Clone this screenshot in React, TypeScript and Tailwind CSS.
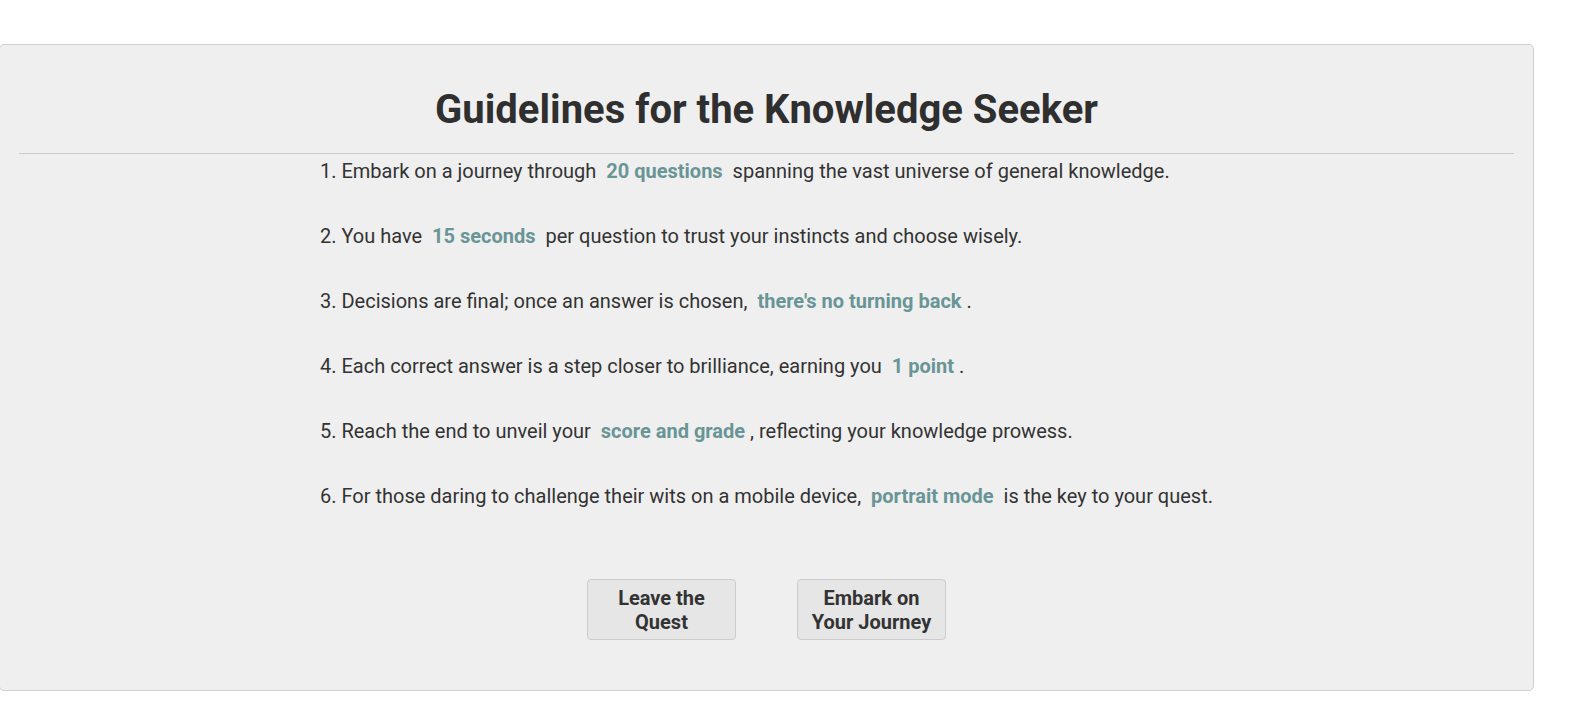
import React from 'react';

const rules: { before: string; mark: string; after: string }[] = [
  { before: '1. Embark on a journey through ', mark: '20 questions', after: ' spanning the vast universe of general knowledge.' },
  { before: '2. You have ', mark: '15 seconds', after: ' per question to trust your instincts and choose wisely.' },
  { before: '3. Decisions are final; once an answer is chosen, ', mark: "there's no turning back", after: '.' },
  { before: '4. Each correct answer is a step closer to brilliance, earning you ', mark: '1 point', after: '.' },
  { before: '5. Reach the end to unveil your ', mark: 'score and grade', after: ', reflecting your knowledge prowess.' },
  { before: '6. For those daring to challenge their wits on a mobile device, ', mark: 'portrait mode', after: ' is the key to your quest.' },
];

export default function App() {
  return (
    <div className="min-h-screen bg-white pt-[44px] font-['Roboto',sans-serif] text-[#333]">
      <div className="-ml-[1px] w-[1535px] rounded-[5px] border border-[#cfcfcf] bg-[#efefef] pt-[41px] pb-[50px]">
        <h1 className="text-center text-[40px] font-bold leading-[48px] text-[#2f2f2f]">
          Guidelines for the Knowledge Seeker
        </h1>
        <hr className="mx-[19px] mt-[19px] border-0 border-t border-[#cccccc]" />
        <ul className="mx-auto mt-[2px] flex w-fit flex-col gap-[35px]">
          {rules.map((r, i) => (
            <li key={i} className="text-[20px] leading-[30px]">
              {r.before}
              <span className="mx-[5px] font-bold text-[#699596]">{r.mark}</span>
              {r.after}
            </li>
          ))}
        </ul>
        <div className="mt-[68px] flex justify-center gap-[61px]">
          <button className="flex h-[61px] w-[149px] items-center justify-center rounded-[4px] border border-[#cccccc] bg-[#e6e6e6] text-[20px] font-bold leading-[24px] text-[#333]">
            Leave the
            <br />
            Quest
          </button>
          <button className="flex h-[61px] w-[149px] items-center justify-center rounded-[4px] border border-[#cccccc] bg-[#e6e6e6] text-[20px] font-bold leading-[24px] text-[#333]">
            Embark on
            <br />
            Your Journey
          </button>
        </div>
      </div>
    </div>
  );
}
